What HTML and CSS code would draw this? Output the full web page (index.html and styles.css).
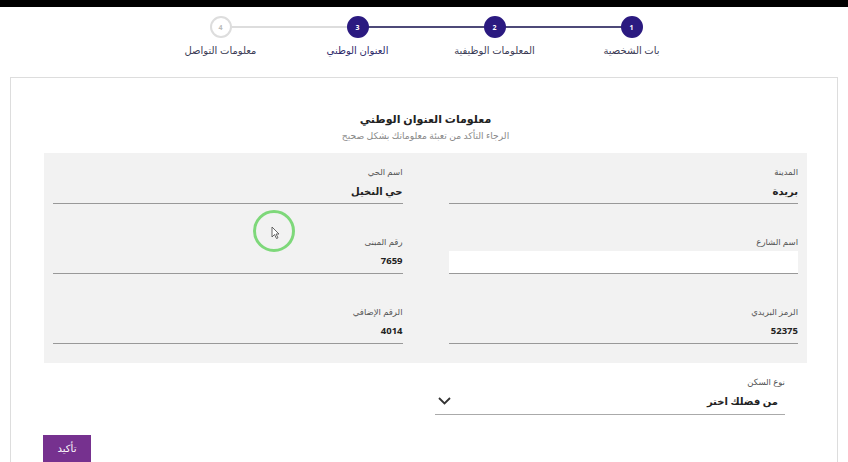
FILE: index.html
```html
<!DOCTYPE html>
<html lang="ar" dir="rtl">
<head>
    <meta charset="UTF-8">
    <meta name="viewport" content="width=device-width, initial-scale=1.0">
    <title>معلومات العنوان الوطني</title>
    <link rel="stylesheet" href="styles.css">
</head>
<body>
    <div class="topbar"></div>

    <ol class="stepper">
        <li class="step done"><span class="step-num">1</span><span class="step-label">بات الشخصية</span></li>
        <li class="step done"><span class="step-num">2</span><span class="step-label">المعلومات الوظيفية</span></li>
        <li class="step current"><span class="step-num">3</span><span class="step-label">العنوان الوطني</span></li>
        <li class="step"><span class="step-num">4</span><span class="step-label">معلومات التواصل</span></li>
    </ol>

    <main class="card">
        <h1 class="card-title">معلومات العنوان الوطني</h1>
        <p class="card-subtitle">الرجاء التأكد من تعبئة معلوماتك بشكل صحيح</p>

        <div class="panel">
            <div class="field">
                <label>المدينة</label>
                <div class="field-value">بريدة</div>
            </div>
            <div class="field">
                <label>اسم الحي</label>
                <div class="field-value">حي النخيل</div>
            </div>
            <div class="field">
                <label for="street">اسم الشارع</label>
                <input type="text" id="street" class="field-input">
            </div>
            <div class="field">
                <label>رقم المبنى</label>
                <div class="field-value num">7659</div>
            </div>
            <div class="field">
                <label>الرمز البريدي</label>
                <div class="field-value num">52375</div>
            </div>
            <div class="field">
                <label>الرقم الإضافي</label>
                <div class="field-value num">4014</div>
            </div>
        </div>

        <div class="field select-field">
            <label>نوع السكن</label>
            <div class="select-box">
                <span>من فضلك اختر</span>
                <svg width="13" height="8" viewBox="0 0 13 8"><polyline points="1,1 6.5,6.5 12,1" fill="none" stroke="#333" stroke-width="1.8"/></svg>
            </div>
        </div>

        <button class="submit-button">تأكيد</button>

        <div class="cursor-ring">
            <svg width="9" height="13" viewBox="0 0 9 13"><path d="M1 1 L1 11 L3.5 8.5 L5.5 12.5 L7 11.8 L5 8 L8 8 Z" fill="#fff" stroke="#555" stroke-width="0.9"/></svg>
        </div>
    </main>
</body>
</html>
```

FILE: styles.css
```css
body {
    font-family: "Open Sans", "DejaVu Sans", sans-serif;
    margin: 0;
    padding: 0;
    background-color: #fff;
    color: #333;
    height: 462px;
    overflow: hidden;
}
.topbar {
    height: 7px;
    background-color: #000;
}
.stepper {
    list-style: none;
    display: flex;
    justify-content: center;
    margin: 0;
    padding: 9px 0 0 4px;
}
.step {
    position: relative;
    width: 137px;
    display: flex;
    flex-direction: column;
    align-items: center;
}
.step:not(:last-child)::after {
    content: "";
    position: absolute;
    top: 10px;
    right: 50%;
    width: 137px;
    height: 2px;
    background-color: #ddd;
}
.step.done::after {
    background-color: #4d4a78;
}
.step-num {
    position: relative;
    z-index: 1;
    width: 18px;
    height: 18px;
    border: 2px solid #ddd;
    border-radius: 50%;
    background-color: #fff;
    color: #bbb;
    font-size: 7px;
    font-weight: bold;
    display: flex;
    align-items: center;
    justify-content: center;
}
.step.done .step-num,
.step.current .step-num {
    background-color: #2b1a80;
    border-color: #2b1a80;
    color: #fff;
}
.step-label {
    margin-top: 5px;
    font-size: 10px;
    color: #3b3b55;
    white-space: nowrap;
}
.step.current .step-label {
    color: #2e2a6a;
}
.card {
    position: relative;
    box-sizing: border-box;
    margin: 20px 10px 0;
    border: 1px solid #ddd;
    border-bottom: none;
    padding: 34px 30px 0 33px;
    height: 386px;
    display: flex;
    flex-direction: column;
}
.card-title {
    margin: 0;
    text-align: center;
    font-size: 11px;
    font-weight: bold;
    color: #222;
    line-height: 14px;
}
.card-subtitle {
    margin: 4px 0 0;
    text-align: center;
    font-size: 9.2px;
    color: #888;
    line-height: 12px;
}
.panel {
    margin-top: 11px;
    background-color: #f2f2f2;
    padding: 13px 9px 19px;
    display: grid;
    grid-template-columns: 1fr 1fr;
    column-gap: 46px;
    row-gap: 32px;
}
.field label {
    display: block;
    font-size: 8.5px;
    line-height: 12px;
    color: #555;
}
.field-value,
.field-input {
    box-sizing: border-box;
    width: 100%;
    height: 25px;
    margin-top: 1px;
    border: none;
    border-bottom: 1px solid #999;
    font-size: 10px;
    font-weight: bold;
    color: #222;
    line-height: 24px;
    padding: 0;
}
.field-input {
    background-color: #fff;
    height: 23px;
    margin-top: 3px;
    font-family: inherit;
    outline: none;
}
.field-value.num {
    font-size: 9.5px;
}
.select-field {
    width: 350px;
    margin: 13px 22px 0 0;
}
.select-box {
    height: 26px;
    border-bottom: 1px solid #aaa;
    display: flex;
    align-items: center;
    justify-content: space-between;
    padding: 0 7px 0 2px;
    font-size: 10px;
    font-weight: bold;
    color: #222;
}
.select-box svg {
    margin-left: 1px;
}
.submit-button {
    align-self: flex-end;
    margin: 20px 0 0 -1px;
    width: 48px;
    height: 27px;
    border: none;
    background-color: #76318f;
    color: #fff;
    font-family: inherit;
    font-size: 10px;
    padding: 0 0 2px;
}
.cursor-ring {
    position: absolute;
    top: 132px;
    left: 242px;
    width: 36px;
    height: 36px;
    border: 3px solid #7ed87a;
    border-radius: 50%;
    display: flex;
    align-items: center;
    justify-content: center;
}
.cursor-ring svg {
    margin: 0 0 -3px 3px;
}
```
